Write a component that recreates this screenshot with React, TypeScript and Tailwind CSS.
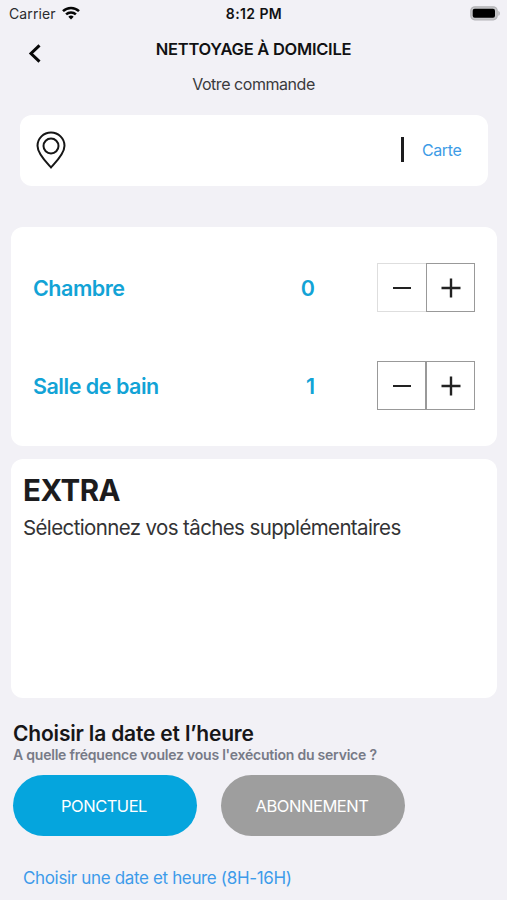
import React from 'react';

function StatusBar() {
  return (
    <div className="flex h-7 items-center justify-between pl-[9px] pr-[6px]">
      <div className="flex w-[150px] items-center gap-[6px]">
        <span className="text-[14px] leading-7 tracking-[0.1px] text-[#2b2b2e]">Carrier</span>
        <svg className="mb-[2px]" width="18" height="14" viewBox="0 0 18 14" fill="none" stroke="#050505" strokeWidth="2.5">
          <path d="M1 5.2a11.4 11.4 0 0 1 16 0" />
          <path d="M4.1 8.4a7 7 0 0 1 9.8 0" />
          <path d="M9 13.6 6.3 10.8a3.9 3.9 0 0 1 5.4 0Z" fill="#050505" stroke="none" />
        </svg>
      </div>
      <span className="mr-[2px] text-[14px] font-semibold leading-7 tracking-[0.4px] text-[#111113]">8:12 PM</span>
      <div className="flex w-[150px] justify-end">
        <svg className="mb-[2px]" width="31" height="15" viewBox="0 0 31 15">
          <rect x="0.8" y="0.8" width="26.4" height="13" rx="4" fill="#c6c6c9" stroke="#b4b4b7" strokeWidth="1.2" />
          <rect x="2.7" y="2.8" width="22.3" height="9" rx="2" fill="#000" />
          <path d="M28.4 5c1.8.6 1.8 4.200 0 4.800Z" fill="#acacaf" />
        </svg>
      </div>
    </div>
  );
}

function Header() {
  return (
    <header className="grid h-[87px] grid-cols-[60px_1fr_60px] content-start">
      <button className="flex h-[50px] items-center pl-[28px]" aria-label="Retour">
        <svg width="13" height="19" viewBox="0 0 13 19" fill="none" stroke="#080808" strokeWidth="3">
          <path d="M11.500 1.400 3 9.500l8.500 8.100" />
        </svg>
      </button>
      <div className="flex flex-col items-center whitespace-nowrap">
        <h1 className="mt-[9px] text-[16.5px] font-semibold leading-6 tracking-[-0.27px] text-[#111113]">NETTOYAGE À DOMICILE</h1>
        <p className="mt-[11px] text-[16px] leading-6 tracking-[-0.45px] text-[#3a3a3d]">Votre commande</p>
      </div>
    </header>
  );
}

function LocationCard() {
  return (
    <section className="ml-[20px] mr-[19px] flex h-[71px] items-center rounded-[12px] bg-white pb-[2px] pl-[16px] pr-[26px]">
      <svg width="30" height="38" viewBox="0 0 30 38" fill="none" stroke="#161616" strokeWidth="2">
        <path d="M15 36.400C10.500 31.500 1.500 23 1.500 14.800a13.500 13.300 0 0 1 27 0C28.500 23 19.500 31.500 15 36.400Z" />
        <circle cx="15" cy="15" r="7.500" />
      </svg>
      <div className="ml-auto h-[25px] w-[3px] bg-[#1c1c1e]" />
      <span className="ml-[18px] w-[40px] whitespace-nowrap text-[16px] leading-6 tracking-[-0.4px] text-[#3d9be6]">Carte</span>
    </section>
  );
}

function Counter({ label, value, minusOff = false }: { label: string; value: number; minusOff?: boolean }) {
  return (
    <div className="flex h-[98px] items-center px-[22px] text-[21.5px] font-semibold text-[#12a3d6]">
      <span className="flex-1 whitespace-nowrap tracking-[-0.48px]">{label}</span>
      <span className="mr-[62px] tracking-normal">{value}</span>
      <div className="mb-[1px] flex">
        <button
          aria-label="Moins"
          className={`flex h-[49px] w-[49px] items-center justify-center border ${minusOff ? 'border-r-0 border-[#dedede]' : 'border-[#999]'}`}
        >
          <span className="h-[2px] w-[18px] bg-[#222]" />
        </button>
        <button aria-label="Plus" className="flex h-[49px] w-[49px] items-center justify-center border border-[#999]">
          <svg width="20" height="20" viewBox="0 0 20 20" stroke="#222" strokeWidth="2.400">
            <path d="M10 0.500v19M0.500 10h19" />
          </svg>
        </button>
      </div>
    </div>
  );
}

export default function App() {
  return (
    <div className="h-[900px] w-[507px] overflow-hidden bg-[#f2f1f6] font-['Inter','Liberation_Sans',sans-serif]">
      <StatusBar />
      <Header />
      <LocationCard />
      <section className="ml-[11px] mr-[10px] mt-[41px] h-[219px] rounded-[12px] bg-white pt-[12px]">
        <Counter label="Chambre" value={0} minusOff />
        <Counter label="Salle de bain" value={1} />
      </section>
      <section className="ml-[11px] mr-[10px] mt-[13px] h-[239px] whitespace-nowrap rounded-[12px] bg-white pl-[12px] pt-[13px]">
        <h2 className="text-[29.500px] font-bold leading-9 tracking-[-0.5px] text-[#1c1c1e]">EXTRA</h2>
        <p className="mt-[6px] text-[20.500px] leading-7 tracking-[-0.62px] text-[#333335]">Sélectionnez vos tâches supplémentaires</p>
      </section>
      <section className="whitespace-nowrap pl-[13px] pt-[22px]">
        <h2 className="text-[21px] font-semibold leading-7 tracking-[-0.18px] text-[#161618]">Choisir la date et l’heure</h2>
        <p className="text-[14px] font-semibold leading-[14px] tracking-[-0.22px] text-[#777a87]">A quelle fréquence voulez vous l'exécution du service ?</p>
        <div className="mt-[13px] flex gap-6">
          <button className="h-[61px] w-[184px] rounded-full bg-[#05a5dd] pr-[2px] pt-[1px] text-[16.500px] tracking-[-0.5px] text-white">PONCTUEL</button>
          <button className="h-[61px] w-[184px] rounded-full bg-[#9e9e9e] pr-[2px] pt-[1px] text-[16.500px] tracking-[-0.45px] text-white">ABONNEMENT</button>
        </div>
        <p className="ml-[10px] mt-[28px] text-[17px] leading-7 tracking-[-0.35px] text-[#3d9bea]">Choisir une date et heure (8H-16H)</p>
      </section>
    </div>
  );
}
